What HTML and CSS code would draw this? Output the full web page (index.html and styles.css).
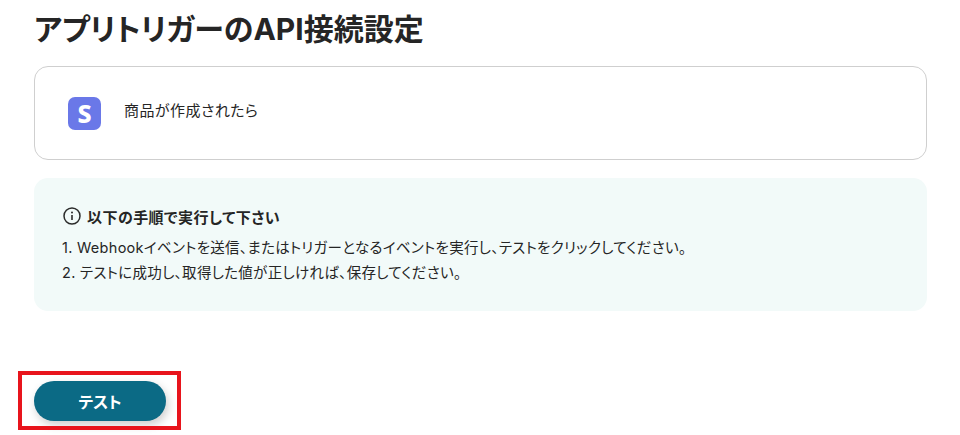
FILE: index.html
```html
<!DOCTYPE html>
<html lang="ja">
<head>
    <title>アプリトリガーのAPI接続設定</title>
    <meta charset="UTF-8">
    <link rel="stylesheet" href="styles.css">
</head>
<body>
    <div class="container">
        <h1 class="title">アプリトリガーのAPI接続設定</h1>

        <div class="trigger-card">
            <span class="app-icon">S</span>
            <span class="trigger-name">商品が作成されたら</span>
        </div>

        <div class="notice">
            <div class="notice-head">
                <svg class="info-icon" width="18" height="18" viewBox="0 0 18 18" fill="none">
                    <circle cx="9" cy="9" r="8" stroke="#2b2b2b" stroke-width="1.5"/>
                    <circle cx="9" cy="5.4" r="1" fill="#2b2b2b"/>
                    <path d="M9 8v5" stroke="#2b2b2b" stroke-width="1.6"/>
                </svg>
                <span>以下の手順で実行して下さい</span>
            </div>
            <p class="notice-line">1. Webhookイベントを送信、またはトリガーとなるイベントを実行し、テストをクリックしてください。</p>
            <p class="notice-line">2. テストに成功し、取得した値が正しければ、保存してください。</p>
        </div>

        <div class="actions">
            <button class="test-button">テスト</button>
            <div class="highlight"></div>
        </div>
    </div>
</body>
</html>
```

FILE: styles.css
```css
html, body {
    margin: 0;
    height: 435px;
    overflow: hidden;
    background: #fff;
}

body {
    font-family: Inter, "Noto Sans CJK JP", sans-serif;
    font-feature-settings: "palt";
    color: #252525;
}

.container {
    display: flex;
    flex-direction: column;
    width: 893px;
    margin-left: 34px;
}

.title {
    margin: 0;
    height: 66px;
    font-size: 30px;
    line-height: 58px;
    font-weight: 700;
}

.trigger-card {
    display: flex;
    align-items: center;
    gap: 23px;
    height: 94px;
    box-sizing: border-box;
    padding-left: 33px;
    border: 1px solid #cfcfcf;
    border-radius: 14px;
}

.app-icon {
    display: flex;
    align-items: center;
    justify-content: center;
    width: 33px;
    height: 33px;
    border-radius: 7px;
    background: #6a78e8;
    color: #fff;
    font-family: "Noto Sans", sans-serif;
    font-size: 25px;
    font-weight: 800;
}

.trigger-name {
    font-size: 15px;
    letter-spacing: 0.03em;
    line-height: 20px;
    margin-top: -4px;
}

.notice {
    height: 133px;
    box-sizing: border-box;
    margin-top: 18px;
    padding: 26px 28px 0;
    border-radius: 14px;
    background: #f2faf9;
}

.notice-head {
    display: flex;
    align-items: center;
    gap: 6px;
    height: 24px;
    margin-bottom: 7px;
    font-size: 15px;
    font-weight: 700;
    letter-spacing: 0.03em;
}

.info-icon {
    margin-left: 1px;
}

.notice-line {
    margin: 0;
    font-size: 14.5px;
    letter-spacing: 0.02em;
    line-height: 25px;
}

.actions {
    position: relative;
    margin-top: 70px;
}

.test-button {
    display: block;
    width: 132px;
    height: 40px;
    padding: 0;
    border: none;
    border-radius: 20px;
    background: #0b6a85;
    color: #fff;
    font-family: inherit;
    font-feature-settings: inherit;
    font-size: 16px;
    font-weight: 700;
    box-shadow: 2px 4px 10px rgba(0, 0, 0, 0.2);
}

/* red annotation frame over the button */
.highlight {
    position: absolute;
    left: -16px;
    top: -10px;
    width: 163px;
    height: 59px;
    box-sizing: border-box;
    border: 4px solid #e8141c;
}
```
